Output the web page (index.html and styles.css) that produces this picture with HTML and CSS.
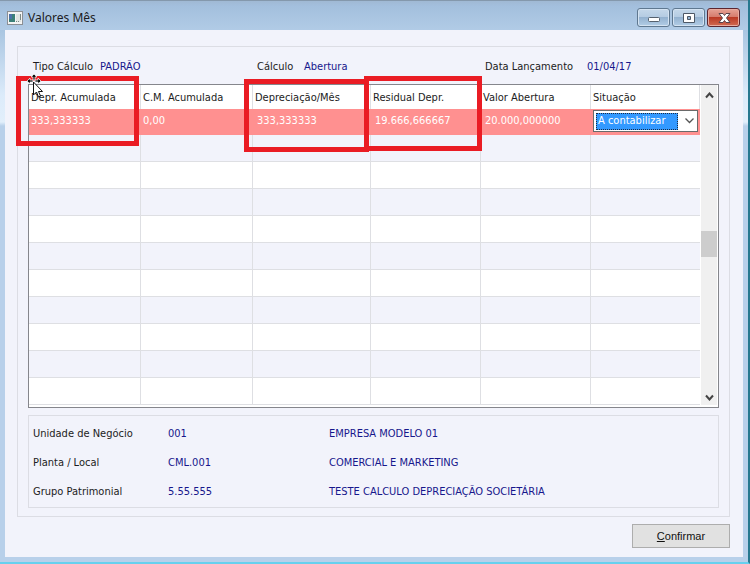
FILE: index.html
```html
<!DOCTYPE html>
<html lang="pt-BR">

<head>
  <meta charset="UTF-8">
  <meta name="viewport" content="width=device-width, initial-scale=1.0">
  <title>Valores Mês</title>
  <link rel="stylesheet" href="styles.css">
</head>

<body>
  <div class="window">
    <header class="titleBar">
      <svg class="appIcon" width="16" height="14" viewBox="0 0 16 14">
        <rect x="0.5" y="0.5" width="15" height="13" fill="#f4f4f4" stroke="#8b8f94" />
        <rect x="2" y="3" width="6" height="8" fill="#3c8078" />
        <rect x="2" y="3" width="3" height="5" fill="#4c71a8" />
        <rect x="9" y="3" width="5" height="8" fill="#dfe5e2" />
        <path d="M9 10.500h1M11 10.500h1M13.500 3v6" stroke="#7b8a86" />
      </svg>
      <h1>Valores Mês</h1>
      <div class="winButtons">
        <button type="button" class="winButton" aria-label="Minimizar">
          <svg width="30" height="16" viewBox="0 0 30 16">
            <rect x="9.500" y="7.500" width="11" height="4" rx="1" fill="#fff" stroke="#55616e" />
          </svg>
        </button>
        <button type="button" class="winButton" aria-label="Maximizar">
          <svg width="30" height="16" viewBox="0 0 30 16">
            <path fill-rule="evenodd" d="M9.500 3.500h11v9h-11zM13.500 6.500v3h3v-3z" fill="#fff" stroke="#4d5866" />
          </svg>
        </button>
        <button type="button" class="winButton close" aria-label="Fechar">
          <svg width="30" height="16" viewBox="0 0 30 16">
            <path d="M10 3.500h4l1.500 2 1.500-2h4L17.500 8l3.500 4.500h-4l-1.500-2-1.500 2h-4L13.500 8z" fill="#fff" stroke="#59444c" />
          </svg>
        </button>
      </div>
    </header>

    <main class="content">
      <div class="group">
        <dl class="summary">
          <div class="tipo">
            <dt>Tipo Cálculo</dt>
            <dd>PADRÃO</dd>
          </div>
          <div class="calculo">
            <dt>Cálculo</dt>
            <dd>Abertura</dd>
          </div>
          <div class="data">
            <dt>Data Lançamento</dt>
            <dd>01/04/17</dd>
          </div>
        </dl>

        <div class="gridBox">
          <table class="grid">
            <colgroup>
              <col class="colA">
              <col class="colA">
              <col class="colB">
              <col class="colC">
              <col class="colC">
              <col>
            </colgroup>
            <thead>
              <tr>
                <th>Depr. Acumulada<span class="mark markDepr"></span></th>
                <th>C.M. Acumulada</th>
                <th>Depreciação/Mês<span class="mark markMes"></span></th>
                <th>Residual Depr.<span class="mark markResidual"></span></th>
                <th>Valor Abertura</th>
                <th>Situação</th>
              </tr>
            </thead>
            <tbody>
              <tr class="selected">
                <td>333,333333</td>
                <td>0,00</td>
                <td class="indent">333,333333</td>
                <td class="indent">19.666,666667</td>
                <td class="indent">20.000,000000</td>
                <td class="situacao">
                  <div class="combo">
                    <select aria-label="Situação">
                      <option>A contabilizar</option>
                    </select>
                    <svg width="9" height="6" viewBox="0 0 9 6">
                      <path d="M0.500 0.500l4 4 4-4" fill="none" stroke="#555" stroke-width="1.300" />
                    </svg>
                  </div>
                </td>
              </tr>
              <tr><td></td><td></td><td></td><td></td><td></td><td></td></tr>
              <tr><td></td><td></td><td></td><td></td><td></td><td></td></tr>
              <tr><td></td><td></td><td></td><td></td><td></td><td></td></tr>
              <tr><td></td><td></td><td></td><td></td><td></td><td></td></tr>
              <tr><td></td><td></td><td></td><td></td><td></td><td></td></tr>
              <tr><td></td><td></td><td></td><td></td><td></td><td></td></tr>
              <tr><td></td><td></td><td></td><td></td><td></td><td></td></tr>
              <tr><td></td><td></td><td></td><td></td><td></td><td></td></tr>
              <tr><td></td><td></td><td></td><td></td><td></td><td></td></tr>
              <tr><td></td><td></td><td></td><td></td><td></td><td></td></tr>
            </tbody>
          </table>
          <div class="scrollBar">
            <svg width="9" height="7" viewBox="0 0 9 7">
              <path d="M1 5.500l3.500-4 3.500 4" fill="none" stroke="#444" stroke-width="2" />
            </svg>
            <div class="thumb"></div>
            <svg width="9" height="7" viewBox="0 0 9 7">
              <path d="M1 1.500l3.500 4 3.500-4" fill="none" stroke="#444" stroke-width="2" />
            </svg>
          </div>
          <!-- move cursor -->
          <svg class="cursor" width="18" height="25" viewBox="0 0 18 25">
            <path d="M8 0l3 3H9v3H7V3H5zM1 7l3-3v2h3v2H4v2zM15 7l-3-3v2H9v2h3v2z" fill="#111" stroke="#fff" stroke-width="0.700" />
            <path d="M7.500 8v13l3-3 2 5 2-1-2-4.500h4z" fill="#fff" stroke="#111" />
          </svg>
        </div>

        <dl class="details">
          <dt>Unidade de Negócio</dt>
          <dd>001</dd>
          <dd>EMPRESA MODELO 01</dd>
          <dt>Planta / Local</dt>
          <dd>CML.001</dd>
          <dd>COMERCIAL E MARKETING</dd>
          <dt>Grupo Patrimonial</dt>
          <dd>5.55.555</dd>
          <dd>TESTE CALCULO DEPRECIAÇÃO SOCIETÁRIA</dd>
        </dl>
      </div>

      <div class="actions">
        <button type="button" class="confirm"><u>C</u>onfirmar</button>
      </div>
    </main>
  </div>
</body>

</html>
```
FILE: styles.css
```css
* {
  box-sizing: border-box;
}

body {
  margin: 0;
  font-family: "DejaVu Sans Condensed", "Noto Sans", sans-serif;
  font-size: 11px;
  line-height: 16px;
  color: #1c1c22;
  background: #b8d0ea;
}

dl,
dd,
h1 {
  margin: 0;
}

dd {
  color: #17178c;
}

/* window frame */
.window {
  min-height: 100vh;
  padding: 0 5px 5px;
  border-right: 2px solid #27788f;
  border-bottom: 2px solid #66d0ee;
  background: linear-gradient(#a3bfdc, #a9c5e1 30px, #dcebfa 95px, #e2effb 122px, #b8d0ea 126px);
  display: flex;
  flex-direction: column;
}

.titleBar {
  height: 30px;
  margin: 0 -5px;
  padding: 4px 8px 0 7px;
  display: flex;
  align-items: center;
  background: linear-gradient(#a0b9d4, #a3bfdd 5px, #b1cbe6);
  border-top: 1px solid #8498ac;
}

h1 {
  margin-left: 5px;
  font-family: "Noto Sans", sans-serif;
  font-size: 12px;
  font-weight: normal;
  line-height: 16px;
}

.winButtons {
  margin-left: auto;
  display: flex;
  gap: 2px;
}

.winButton {
  width: 33px;
  height: 19px;
  padding: 0;
  display: flex;
  align-items: center;
  justify-content: center;
  border: 1px solid #5f7890;
  border-radius: 3px;
  background: linear-gradient(#c5d8ea, #b4cbe2 48%, #94b2d0 50%, #b2cde6);
  box-shadow: inset 0 0 0 1px #d4e3f2;
}

.close {
  border-color: #5c2630;
  background: linear-gradient(#e6a295, #d57a6b 48%, #bb3a25 50%, #d06a52);
  box-shadow: inset 0 0 0 1px #e8aca0;
}

.content {
  flex: 1;
  padding: 16px 13px 9px 12px;
  background: #f2f3fb;
}

.group {
  padding: 7px 10px 8px;
  border: 1px solid #dcdde4;
}

.summary {
  display: flex;
  height: 30px;
  padding: 5px;
}

.summary div {
  display: flex;
}

.tipo,
.calculo {
  flex: 0 0 224px;
}

.calculo {
  flex-basis: 228px;
}

.tipo dt {
  width: 67px;
}

.calculo dt {
  width: 47px;
}

.data dt {
  width: 102px;
}

/* grid */
.gridBox {
  position: relative;
  display: flex;
  gap: 1px;
  padding: 0 1px 2px 0;
  border: 1px solid #85868c;
  background: #fff;
}

.grid {
  flex: 1;
  width: 100%;
  table-layout: fixed;
  border-spacing: 0;
}

.colA {
  width: 112px;
}

.colB {
  width: 118px;
}

.colC {
  width: 110px;
}

.grid th,
.grid td {
  height: 27px;
  padding: 0 2px;
  border-right: 1px solid #dedfe3;
  border-bottom: 1px solid #dedfe3;
  text-align: left;
  font-weight: normal;
  white-space: nowrap;
}

.grid th {
  position: relative;
  height: 24px;
  padding-top: 2px;
  border-bottom: 0;
}

.grid td:last-child {
  border-right: 0;
}

.grid tbody tr:nth-child(even) {
  background: #f2f3fb;
}

.grid .selected td {
  height: 26px;
  padding-bottom: 2px;
  border: 0;
  background: #ff9090;
  color: #fff;
}

.grid .selected .indent {
  padding-left: 4px;
}

.grid .situacao {
  padding: 0 2px 2px;
}

.combo {
  display: flex;
  align-items: center;
  gap: 7px;
  height: 22px;
  padding: 2px;
  border: 1px solid #6a6a6a;
  background: #fff;
}

.combo select {
  flex: 0 1 82px;
  min-width: 0;
  height: 17px;
  padding: 0 1px;
  appearance: none;
  border: 1px dotted #1b2b44;
  border-radius: 0;
  background: #3399ff;
  color: #fff;
  font: inherit;
  line-height: 14px;
}

.scrollBar {
  flex: 0 0 16px;
  display: flex;
  flex-direction: column;
  align-items: center;
  padding: 7px 0 4px;
  background: #f0f0f0;
}

.thumb {
  width: 16px;
  height: 26px;
  margin: 132px 0 auto;
  background: #cdcdcd;
}

/* red outlines over the columns being pointed out */
.mark {
  position: absolute;
  z-index: 1;
  border: 5px solid #ea1c24;
  pointer-events: none;
}

.markDepr {
  top: -9px;
  left: -13px;
  width: 123px;
  height: 70px;
}

.markMes {
  top: -6px;
  left: -9px;
  width: 125px;
  height: 73px;
}

.markResidual {
  top: -9px;
  left: -7px;
  width: 118px;
  height: 75px;
}

.cursor {
  position: absolute;
  z-index: 2;
  top: -11px;
  left: -3px;
}

.details {
  margin-top: 7px;
  padding: 10px 4px 7px;
  display: grid;
  grid-template-columns: 135px 161px 1fr;
  row-gap: 13px;
  border: 1px solid #dcdde4;
}

.actions {
  display: flex;
  justify-content: flex-end;
  margin-top: 7px;
}

.confirm {
  width: 98px;
  height: 24px;
  padding: 0;
  border: 1px solid #adadad;
  background: #e1e1e1;
  color: #111;
  font-family: "Liberation Sans", sans-serif;
  font-size: 11px;
}
```
